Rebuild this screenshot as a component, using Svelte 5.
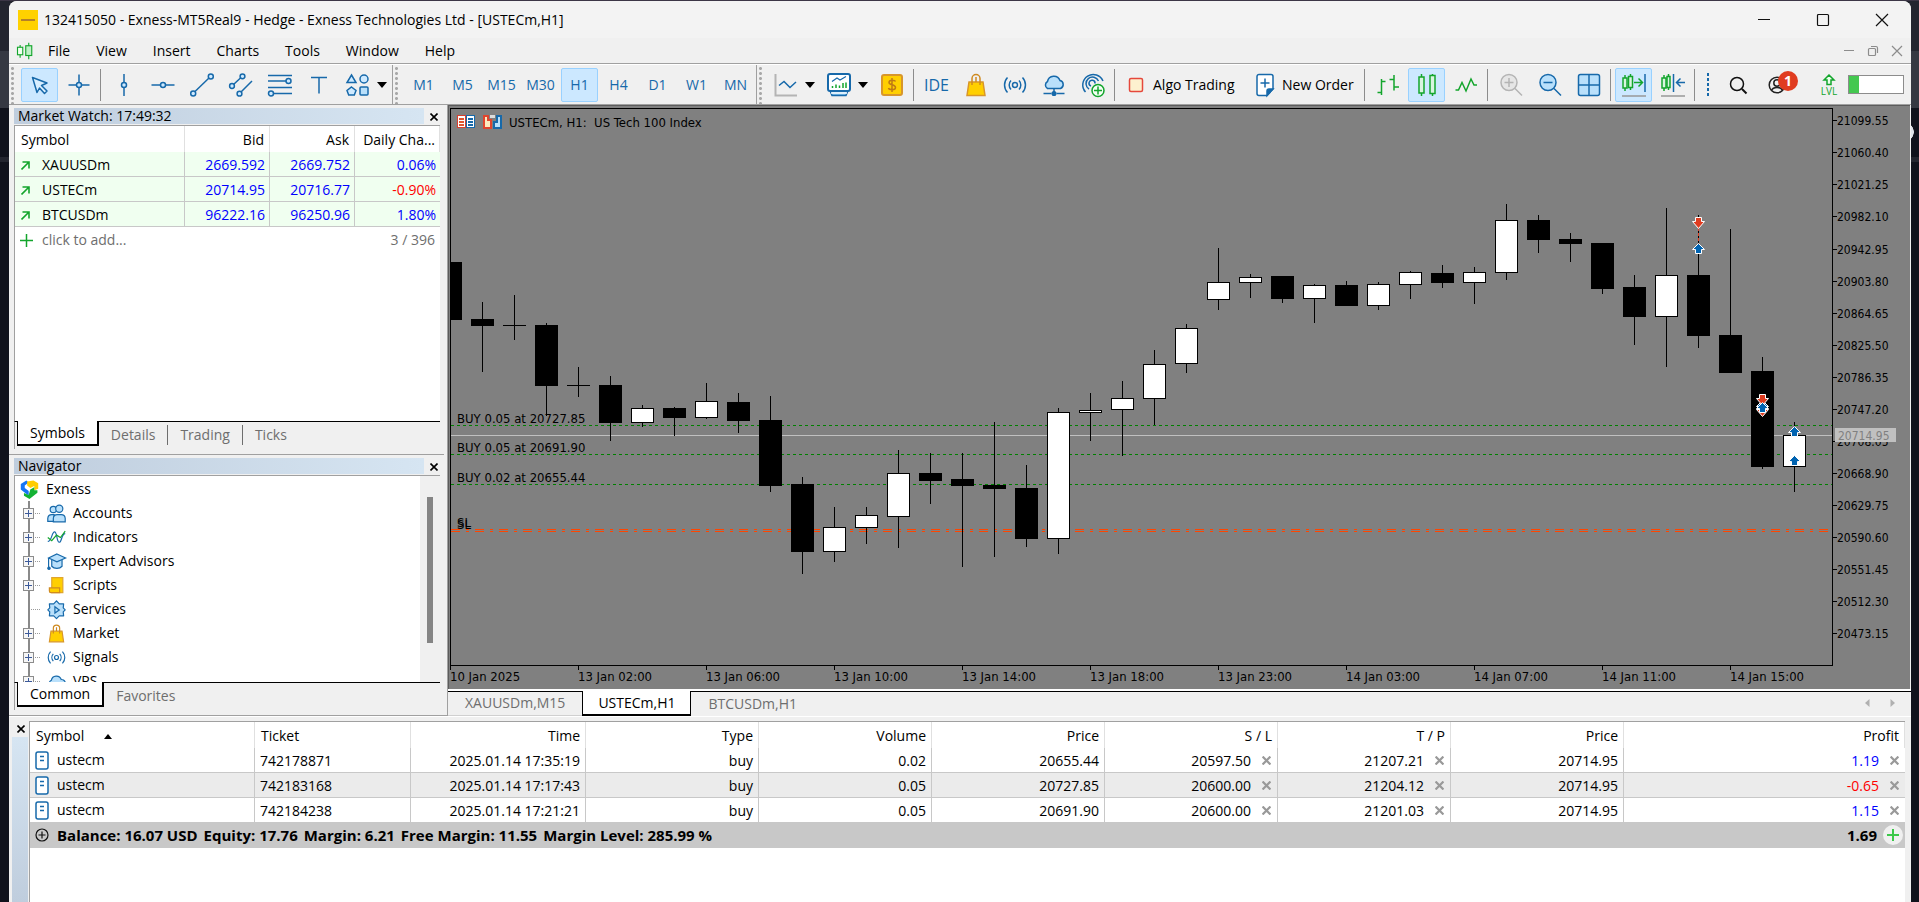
<script>
  const menus = ['File', 'View', 'Insert', 'Charts', 'Tools', 'Window', 'Help'];
  const drawTools = [
    ['vline', 'Vertical line'], ['hline', 'Horizontal line'], ['trend', 'Trendline'], ['channel', 'Channel'],
    ['fibo', 'Fibonacci'], ['text', 'Text'], ['shapes', 'Shapes']
  ];
  const frames = ['M1', 'M5', 'M15', 'M30', 'H1', 'H4', 'D1', 'W1', 'MN'];
  const services = [['bag', 'Market'], ['signal', 'Signals'], ['cloud', 'VPS'], ['target', 'Copy']];

  const quotes = [
    { symbol: 'XAUUSDm', bid: '2669.592', ask: '2669.752', change: '0.06%' },
    { symbol: 'USTECm', bid: '20714.95', ask: '20716.77', change: '-0.90%' },
    { symbol: 'BTCUSDm', bid: '96222.16', ask: '96250.96', change: '1.80%' }
  ];

  const tree = [
    { label: 'Accounts', icon: 'people', open: true },
    { label: 'Indicators', icon: 'indicator', open: true },
    { label: 'Expert Advisors', icon: 'expert', open: true },
    { label: 'Scripts', icon: 'script', open: true },
    { label: 'Services', icon: 'gear', open: false },
    { label: 'Market', icon: 'bag', open: true },
    { label: 'Signals', icon: 'signal', open: true },
    { label: 'VPS', icon: 'vps', open: true }
  ];

  const trades = [
    { ticket: '742178871', time: '2025.01.14 17:35:19', volume: '0.02', open: '20655.44', sl: '20597.50', tp: '21207.21', price: '20714.95', profit: '1.19' },
    { ticket: '742183168', time: '2025.01.14 17:17:43', volume: '0.05', open: '20727.85', sl: '20600.00', tp: '21204.12', price: '20714.95', profit: '-0.65' },
    { ticket: '742184238', time: '2025.01.14 17:21:21', volume: '0.05', open: '20691.90', sl: '20600.00', tp: '21201.03', price: '20714.95', profit: '1.15' }
  ];

  // high, body top, body bottom, low, rising
  const candles = [
    [262, 262, 320, 320, 0], [302, 319, 326, 372, 0], [295, 325, 326, 340, 0], [323, 325, 386, 416, 0],
    [367, 385, 386, 397, 0], [376, 385, 423, 441, 0], [405, 408, 423, 427, 1], [407, 408, 418, 436, 0],
    [383, 401, 418, 419, 1], [393, 402, 421, 433, 0], [396, 420, 486, 492, 0], [477, 484, 552, 574, 0],
    [507, 527, 552, 562, 1], [507, 515, 528, 544, 1], [450, 473, 517, 548, 1], [453, 473, 481, 504, 0],
    [453, 479, 486, 567, 0], [422, 485, 489, 557, 0], [465, 488, 539, 547, 0], [408, 412, 539, 554, 1],
    [393, 410, 413, 441, 1], [381, 398, 410, 456, 1], [350, 364, 399, 425, 1], [324, 328, 364, 373, 1],
    [248, 282, 300, 310, 1], [274, 277, 283, 298, 1], [276, 276, 299, 303, 0], [284, 285, 299, 323, 1],
    [281, 285, 306, 306, 0], [282, 284, 306, 310, 1], [271, 272, 285, 299, 1], [265, 273, 283, 288, 0],
    [267, 272, 283, 304, 1], [204, 220, 273, 280, 1], [215, 220, 240, 253, 0], [233, 239, 244, 262, 0],
    [243, 243, 289, 294, 0], [275, 287, 317, 345, 0], [208, 275, 317, 367, 1], [215, 275, 336, 348, 0],
    [229, 335, 373, 373, 0], [357, 371, 467, 469, 0], [422, 435, 467, 492, 1]
  ];
  const LEFT = 450;
  const STEP = 32;
  const prices = Array.from({ length: 17 }, (_, i) => (21099.55 - i * 39.15).toFixed(2));
  const times = [
    '10 Jan 2025', '13 Jan 02:00', '13 Jan 06:00', '13 Jan 10:00', '13 Jan 14:00', '13 Jan 18:00',
    '13 Jan 23:00', '14 Jan 03:00', '14 Jan 07:00', '14 Jan 11:00', '14 Jan 15:00'
  ];
  const orders = [
    { y: 425, label: 'BUY 0.05 at 20727.85' },
    { y: 454, label: 'BUY 0.05 at 20691.90' },
    { y: 484, label: 'BUY 0.02 at 20655.44' }
  ];

  let w = $state(1462);
  let h = $state(584);
  let right = $derived(448 + w - 78);
  let bottom = $derived(105 + h - 24);
  let frame = $state('H1');
</script>

{#snippet icon(name, size = 24)}
  <svg class="ico" width={size} height={size} viewBox="0 0 24 24" fill="none" stroke="#1769aa" stroke-width="1.5" aria-hidden="true">
    {#if name === 'cursor'}
      <path d="M4.500 4.500 L19 10 L13.500 12.500 L19 18 L16.500 20.500 L11.500 15 L9 19.500 Z" fill="#d9efff" stroke-linejoin="round" />
    {:else if name === 'cross'}
      <path d="M12 1.500V9M12 15V22.500M1.500 12H9M15 12H22.500" /><circle cx="12" cy="12" r="2.500" fill="#cfeaff" />
    {:else if name === 'vline'}
      <path d="M12 1V9.500M12 14.500V23" /><circle cx="12" cy="12" r="2.500" fill="#cfeaff" />
    {:else if name === 'hline'}
      <path d="M0.500 12H9.500M14.500 12H23.500" /><circle cx="12" cy="12" r="2.500" fill="#cfeaff" />
    {:else if name === 'trend'}
      <path d="M5 18.500L19 5" /><circle cx="3.200" cy="20.500" r="2.500" fill="#cfeaff" /><circle cx="20.800" cy="3.500" r="2.500" fill="#cfeaff" />
    {:else if name === 'channel'}
      <path d="M4.500 11.500L12 4.500M12 19L23 8" /><circle cx="3" cy="13" r="2.400" fill="#cfeaff" /><circle cx="13.500" cy="3.300" r="2.400" fill="#cfeaff" /><circle cx="10.500" cy="20.700" r="2.400" fill="#cfeaff" />
    {:else if name === 'fibo'}
      <path d="M0 2.500H24M0 8H18M0 14.500H24M6 20.500H24" /><circle cx="20.500" cy="8" r="2.500" fill="#cfeaff" /><circle cx="3" cy="20.500" r="2.500" fill="#cfeaff" />
    {:else if name === 'text'}
      <path d="M4 4.500H20M12 4.500V20.500" />
    {:else if name === 'shapes'}
      <path d="M5.500 2L10 9.500H1Z" fill="#cfeaff" /><circle cx="18" cy="6" r="4" fill="#cfeaff" /><path d="M5.500 14L10 17.500L8.300 22H2.700L1 17.500Z" fill="#cfeaff" /><rect x="14" y="14" width="8" height="8" rx="1" fill="#b9e0fb" />
    {:else if name === 'linechart'}
      <path d="M1.500 1V22.500H23" stroke="#b4b4b4" stroke-width="2" /><path d="M5 12.500L10 8.500L16 14.500L22 9" />
    {:else if name === 'template'}
      <path d="M3 17.500H21L19 22.500H5Z" fill="#7cc0ee" /><rect x="1" y="1" width="22" height="17" rx="2" fill="#fff" stroke-width="2" /><path d="M5 8.500L10 5L13 7L19 3.500" stroke-width="1.200" /><path d="M5.500 15V13M9 15V11.500M12.500 15V12.500M16 15V10M19 15V9.500" stroke="#13a52c" /><path d="M4 20H20" stroke="#fff" />
    {:else if name === 'dollar'}
      <rect x="2" y="2" width="20" height="20" rx="2" fill="#ffcf00" stroke="#d8962a" stroke-width="2" /><path d="M15.500 8.500C15 7 9 6.500 9 9.500C9 12.500 15.500 11 15.500 14.500C15.500 17.500 9 17 8.500 15M12 5V19" stroke="#bf7a14" />
    {:else if name === 'bag'}
      <path d="M5 9H19L21 22.500H3Z" fill="#ffcf00" stroke="#d8962a" /><path d="M8 12V5.500A4 4 0 0 1 16 5.500V12M12 9V4" stroke="#cf8a20" />
    {:else if name === 'signal'}
      <circle cx="12" cy="12" r="2.500" /><path d="M8 7.500A6.500 6.500 0 0 0 8 16.500M16 7.500A6.500 6.500 0 0 1 16 16.500M4.500 4.500A11 11 0 0 0 4.500 19.500M19.500 4.500A11 11 0 0 1 19.500 19.500" />
    {:else if name === 'cloud'}
      <path d="M5.500 15.500A4 4 0 0 1 5.500 8.500A6.500 6.500 0 0 1 18 7.500A4.200 4.200 0 0 1 18.500 15.500Z" fill="#b9e0fb" /><path d="M12 15.500V19M1.500 20.500H9.500M14.500 20.500H22.500" /><circle cx="12" cy="20.500" r="1.800" fill="#1769aa" />
    {:else if name === 'vps'}
      <path d="M5.500 19.500A5 5 0 0 1 5.500 10.500A6.500 6.500 0 0 1 18 9.500A5 5 0 0 1 18.500 19.500Z" fill="#b9e0fb" />
    {:else if name === 'target'}
      <path d="M4.500 19A10.500 10.500 0 1 1 22 8M8 16A6.500 6.500 0 1 1 17.500 8M10 13A3 3 0 1 1 14 10.500" /><circle cx="17" cy="17.500" r="6" fill="#f4fff4" stroke="#13a52c" /><path d="M17 13.500V21.500M13 17.500H21" stroke="#13a52c" />
    {:else if name === 'algo'}
      <rect x="5.500" y="5.500" width="13" height="13" rx="1.500" fill="#fdf1cf" stroke="#e5483c" />
    {:else if name === 'order'}
      <path d="M6 1.500H18A2 2 0 0 1 20 3.500V16L14 22.500H6A2 2 0 0 1 4 20.500V3.500A2 2 0 0 1 6 1.500Z" fill="#fff" /><path d="M20 16H16A2 2 0 0 0 14 18V22.500Z" fill="#1769aa" /><path d="M12 5.500V14.500M7.500 10H16.500" />
    {:else if name === 'bars'}
      <g stroke="#13a52c"><path d="M5.500 6V22M5.500 8.500H9.500M1.500 19.500H5.500M18 2V17.500M13.500 6.500H18M18 14H23" /></g>
    {:else if name === 'candles'}
      <g stroke="#13a52c"><path d="M6.500 1V23M17.500 1V23" /><rect x="4" y="4" width="5" height="16" fill="#d9f5e0" /><rect x="15" y="2.500" width="5" height="18" fill="#d9f5e0" /></g>
    {:else if name === 'zigzag'}
      <path d="M1.500 17H4.500L8 9.500L12 18L17 6L20 12H23" stroke="#13a52c" />
    {:else if name === 'zoomin'}
      <g stroke="#b4b4b4"><circle cx="10" cy="9.500" r="8" fill="#e6e6e6" /><path d="M16 15.500L23 22.500M5.500 9.500H14.500M10 5V14" /></g>
    {:else if name === 'zoomout'}
      <circle cx="10" cy="9.500" r="8" fill="#b9e0fb" /><path d="M16 15.500L23 22.500M5.500 9.500H14.500" />
    {:else if name === 'grid'}
      <rect x="1.500" y="1.500" width="21" height="21" rx="2" fill="#b9e0fb" /><path d="M12 1.500V22.500M1.500 12H22.500" />
    {:else if name === 'scroll'}
      <path d="M0 23H24" stroke="#999" /><path d="M23 1V19" /><g stroke="#13a52c"><path d="M3 2V18M8.500 1V17" /><rect x="1" y="5" width="4" height="10" fill="#d9f5e0" /><rect x="6.500" y="3.500" width="4" height="11" fill="#d9f5e0" /><path d="M12 9.500H20M16.500 5.500L20.500 9.500L16.500 13.500" /></g>
    {:else if name === 'shift'}
      <path d="M0 23H24" stroke="#999" /><path d="M12.500 1V19M16 9.500H24M19.500 5.500L15.500 9.500L19.500 13.500" /><g stroke="#13a52c"><path d="M3 2V18M7.500 1V17" /><rect x="1" y="5" width="4" height="10" fill="#d9f5e0" /><rect x="6" y="3.500" width="3" height="11" fill="#d9f5e0" /></g>
    {:else if name === 'search'}
      <g stroke="#111"><circle cx="11" cy="11" r="6.500" /><path d="M16 16L20.500 20.500" stroke-width="2" /></g>
    {:else if name === 'person'}
      <g stroke="#222"><circle cx="12" cy="12" r="7.800" /><circle cx="12" cy="10" r="3.200" /><path d="M6.500 17.500C8 13.500 16 13.500 17.500 17.500" /></g>
    {:else if name === 'mt'}
      <g stroke="#13a52c"><path d="M5.500 4V21M17 1V23" /><rect x="2" y="7" width="7" height="10" fill="#f0fff0" /><rect x="13" y="5" width="8" height="13" fill="#bff0c6" /></g>
    {:else if name === 'people'}
      <g fill="#b9e0fb"><circle cx="8" cy="7" r="4" /><path d="M1 22V18A5 5 0 0 1 6 13.500H9V22Z" /><circle cx="15.500" cy="6" r="4.500" /><path d="M8 22.500V18A5 5 0 0 1 13 13.500H18A5 5 0 0 1 23 18V22.500Z" /></g>
    {:else if name === 'indicator'}
      <path d="M1 17C6 17 6 5 9.500 5S12 18 15.500 18S18 7 23 7" /><path d="M1 12L6 16L12 9L17 12L23 4" stroke="#13a52c" />
    {:else if name === 'expert'}
      <path d="M6 10V18C9 21.500 16 21.500 19 18V10" fill="#b9e0fb" /><path d="M12.500 2.500L23.500 7.500L12.500 12.500L2 7.500Z" fill="#b9e0fb" /><path d="M2 7.500V19" /><circle cx="2.500" cy="20.500" r="1.500" fill="#1769aa" />
    {:else if name === 'script'}
      <path d="M6 2H20V21H6Z" fill="#ffcf00" stroke="#e0a52d" /><path d="M3 15H16V21H5A2 2 0 0 1 3 19Z" fill="#ffcf00" stroke="#cf8a20" />
    {:else if name === 'gear'}
      <path d="M12 1L15.500 5H21L20.500 10L23 12.500L20.500 15L21 20H15.500L12 23.500L8.500 20H3L3.500 15L1 12.500L3.500 10L3 5H8.500Z" fill="#b9e0fb" stroke-linejoin="round" /><path d="M10 8.500L15.500 12.500L10 16.500Z" />
    {:else if name === 'exness'}
      <g stroke="none"><path d="M1 5L8 0.500L11 3L6 7V10L11 14V20L1 12Z" fill="#1574f5" /><path d="M9 2L17 0.500L23 4V11L18 13V7.500L13 10L9 7Z" fill="#ffcc00" /><path d="M13 12L18 9V13H22V16L12 24L5 20V16.500L11 19Z" fill="#13b234" /></g>
    {/if}
  </svg>
{/snippet}

{#snippet tool(name, label, on = false)}
  <button class="tool" class:on aria-label={label}>{@render icon(name)}</button>
{/snippet}

{#snippet drop(label)}
  <button class="drop" aria-label={label}><svg width="10" height="6" viewBox="0 0 10 6" aria-hidden="true"><path d="M0 0H10L5 6Z" /></svg></button>
{/snippet}

{#snippet cross(label, size = 8)}
  <button class="x" aria-label={label}>
    <svg width={size} height={size} viewBox="0 0 8 8" fill="none" stroke="currentColor" stroke-width="1.6" aria-hidden="true"><path d="M0.500 0.500L7.500 7.500M7.500 0.500L0.500 7.500" /></svg>
  </button>
{/snippet}

{#snippet up(x, y)}
  <path d="M{x} {y}L{x + 6} {y + 6}H{x + 3}V{y + 10}H{x - 3}V{y + 6}H{x - 6}Z" fill="#0063b1" stroke="#fff" />
{/snippet}
{#snippet down(x, y)}
  <path d="M{x} {y + 11}L{x + 6} {y + 4}H{x + 3}V{y}H{x - 3}V{y + 4}H{x - 6}Z" fill="#e03c20" stroke="#fff" />
{/snippet}

<div class="desktop">
  <div class="window">
    <header class="title">
      <span class="app-icon"></span>
      <span class="caption">132415050 - Exness-MT5Real9 - Hedge - Exness Technologies Ltd - [USTECm,H1]</span>
      <button aria-label="Minimize"><svg width="14" height="14" viewBox="0 0 14 14"><path d="M1 6.500H13" /></svg></button>
      <button aria-label="Maximize"><svg width="14" height="14" viewBox="0 0 14 14"><rect x="1.500" y="1.500" width="11" height="11" rx="1" /></svg></button>
      <button aria-label="Close"><svg width="14" height="14" viewBox="0 0 14 14"><path d="M1 1L13 13M13 1L1 13" /></svg></button>
    </header>

    <nav class="menu">
      <span class="mt">{@render icon('mt', 18)}</span>
      {#each menus as item}<button>{item}</button>{/each}
      <div class="mdi">
        <button aria-label="Minimize chart"><svg width="12" height="12" viewBox="0 0 12 12"><path d="M1 5.500H11" /></svg></button>
        <button aria-label="Restore chart"><svg width="12" height="12" viewBox="0 0 12 12"><rect x="1.500" y="3.500" width="7" height="7" rx="1" /><path d="M4 1.500H9A1.500 1.500 0 0 1 10.500 3V8" /></svg></button>
        <button aria-label="Close chart"><svg width="12" height="12" viewBox="0 0 12 12"><path d="M1 1L11 11M11 1L1 11" /></svg></button>
      </div>
    </nav>

    <div class="toolbar">
      <div class="group">
        <i class="grip"></i>
        {@render tool('cursor', 'Cursor', true)}
        {@render tool('cross', 'Crosshair')}
        <i class="sep"></i>
        {#each drawTools as [name, label]}{@render tool(name, label)}{/each}
        {@render drop('More shapes')}
      </div>
      <div class="group">
        <i class="grip"></i>
        {#each frames as f}<button class="tool" class:on={frame === f} onclick={() => (frame = f)}>{f}</button>{/each}
      </div>
      <div class="group last">
        <i class="grip"></i>
        {@render tool('linechart', 'Chart')}
        {@render drop('Chart list')}
        {@render tool('template', 'Templates')}
        {@render drop('Template list')}
        {@render tool('dollar', 'Quotes')}
        <i class="sep"></i>
        <button class="tool ide">IDE</button>
        {#each services as [name, label]}{@render tool(name, label)}{/each}
        <i class="sep"></i>
        <button class="wide algo">{@render icon('algo')}Algo Trading</button>
        <button class="wide order">{@render icon('order')}New Order</button>
        <i class="sep"></i>
        {@render tool('bars', 'Bar chart')}
        {@render tool('candles', 'Candlesticks', true)}
        {@render tool('zigzag', 'Line chart')}
        <i class="sep"></i>
        {@render tool('zoomin', 'Zoom in')}
        {@render tool('zoomout', 'Zoom out')}
        {@render tool('grid', 'Tile windows')}
        <i class="sep"></i>
        {@render tool('scroll', 'Auto scroll', true)}
        {@render tool('shift', 'Chart shift')}
        <i class="sep"></i>
        <i class="dots"></i>
        <div class="status">
          {@render tool('search', 'Search')}
          <button class="tool account" aria-label="Notifications">{@render icon('person')}<b>1</b></button>
          <button class="lvl">
            <svg width="14" height="12" viewBox="0 0 14 12" fill="#eaffea" stroke="#13a52c" stroke-width="1.500" aria-hidden="true"><path d="M7 1L12 6H9V10.500H5V6H2Z" /></svg>
            LVL
          </button>
          <div class="meter"><i></i></div>
        </div>
      </div>
    </div>

    <div class="work">
      <aside>
        <section class="panel watch">
          <div class="bar"><h2>Market Watch: 17:49:32</h2>{@render cross('Close Market Watch')}</div>
          <div class="body">
            <table>
              <colgroup><col /><col class="q" /><col class="q" /><col class="q" /></colgroup>
              <thead><tr><th>Symbol</th><th>Bid</th><th>Ask</th><th>Daily Cha...</th></tr></thead>
              <tbody>
                {#each quotes as q}
                  <tr>
                    <td><svg width="9" height="9" viewBox="0 0 9 9" fill="none" stroke="#13a52c" stroke-width="1.600" aria-hidden="true"><path d="M0.500 8.500L7.500 1.500M1.500 1H8V7.500" /></svg>{q.symbol}</td>
                    <td>{q.bid}</td><td>{q.ask}</td><td class:neg={q.change[0] === '-'}>{q.change}</td>
                  </tr>
                {/each}
              </tbody>
            </table>
            <div class="add">
              <svg width="13" height="13" viewBox="0 0 13 13" stroke="#13a52c" stroke-width="1.500" aria-hidden="true"><path d="M6.500 0V13M0 6.500H13" /></svg>
              <button>click to add...</button><span>3 / 396</span>
            </div>
          </div>
          <div class="tabs"><button class="cur">Symbols</button><button class="div">Details</button><button class="div">Trading</button><button>Ticks</button></div>
        </section>

        <section class="panel navigator">
          <div class="bar"><h2>Navigator</h2>{@render cross('Close Navigator')}</div>
          <div class="body split">
            <ul>
              <li class="root">{@render icon('exness', 19)}Exness</li>
              {#each tree as node}
                <li><span class="branch">{#if node.open}<i></i>{/if}</span>{@render icon(node.icon, 19)}{node.label}</li>
              {/each}
            </ul>
            <div class="track"><i></i></div>
          </div>
          <div class="tabs"><button class="cur">Common</button><button>Favorites</button></div>
        </section>
      </aside>

      <main>
        <div class="chart" bind:clientWidth={w} bind:clientHeight={h}>
          <svg width={w} height={h} viewBox="448 105 {w} {h}" shape-rendering="crispEdges" font-size="13">
            <path d="M448.500 {105 + h}V105.500H{448 + w}" fill="none" stroke="#5c5c5c" />
            {#each orders as o}
              <path d="M451 {o.y + 0.5}H{right}" stroke="#008000" stroke-dasharray="3 3" />
              <text x="457" y={o.y - 2}>{o.label}</text>
            {/each}
            <path d="M451 435.500H{right}" stroke="#c0c0c0" />
            <path d="M451 529.500H{right - 4}M451 531.500H{right - 4}" stroke="#ff4500" stroke-dasharray="9 6 3 6" />
            <text x="457" y="527">SL</text>
            <text x="457" y="529">SL</text>
            {#each candles as [hi, top, low, lo, rising], i}
              {@const x = LEFT + i * STEP}
              <path d="M{x + 0.5} {hi}V{lo}" stroke="#000" />
              {#if rising}
                <rect x={x - 10.5} y={top + 0.5} width="22" height={low - top - 1} fill="#fff" stroke="#000" />
              {:else}
                <rect x={i ? x - 11 : x} y={top} width={i ? 23 : 12} height={low - top} />
              {/if}
            {/each}
            <g shape-rendering="auto">
              <path d="M1698.500 228V244" stroke="#e03c20" stroke-dasharray="3 2" />
              {@render down(1698.5, 217.5)}
              {@render up(1698.5, 243.5)}
              {@render down(1762.5, 405.5)}
              {@render up(1762.5, 400.5)}
              {@render down(1762.5, 394.5)}
              {@render up(1762.5, 402.5)}
              {@render up(1794.5, 426.5)}
              {@render up(1794.5, 455.5)}
            </g>
            <path d="M450.500 {bottom}V108.500H{right + 0.5}V{bottom + 0.5}H450" fill="none" stroke="#000" />
            <g font-size="12">
              {#each prices as p, i}
                {@const y = Math.round(120.3 + i * 32.05)}
                <path d="M{right + 1} {y + 0.5}h4" stroke="#000" />
                <text x={right + 5} y={y + 5}>{p}</text>
              {/each}
              <rect x={right + 3} y="428" width="61" height="14" fill="#c0c0c0" />
              <text x={right + 6} y="440" class="last-price">20714.95</text>
            </g>
            {#each times as t, i}
              <path d="M{LEFT + i * 128 + 0.5} {bottom}v5" stroke="#000" />
              <text x={LEFT + i * 128} y={bottom + 16}>{t}</text>
            {/each}
            <g stroke-width="1">
              <rect x="457.500" y="115.500" width="8" height="12" fill="#fff" stroke="#d8402f" /><rect x="466.500" y="115.500" width="8" height="12" fill="#fff" stroke="#1769aa" />
              <path d="M459 118.500H464M459 121.500H464M459 124.500H464" stroke="#e0552f" stroke-width="2" /><path d="M468 118.500H473M468 121.500H473M468 124.500H473" stroke="#1769aa" stroke-width="2" />
              <path d="M484 116H488V120H491V128H484Z" fill="#fdebc0" stroke="#e0452f" stroke-width="2" /><path d="M497 116H501V128H494V122H497Z" fill="#b9e0fb" stroke="#1769aa" stroke-width="2" /><path d="M490 116.500H495" stroke="#ddd" stroke-width="3" />
            </g>
            <text x="509" y="127" xml:space="preserve">USTECm, H1:  US Tech 100 Index</text>
          </svg>
        </div>
        <div class="chart-tabs">
          <button>XAUUSDm,M15</button><button class="cur">USTECm,H1</button><button class="plain">BTCUSDm,H1</button>
          <div class="pager">
            <button aria-label="Previous tabs"><svg width="5" height="8" viewBox="0 0 5 8"><path d="M4.500 0V8L0 4Z" /></svg></button>
            <button aria-label="Next tabs"><svg width="5" height="8" viewBox="0 0 5 8"><path d="M0.500 0V8L5 4Z" /></svg></button>
          </div>
        </div>
      </main>
    </div>

    <section class="terminal">
      <div class="side">{@render cross('Close terminal')}<i></i></div>
      <div class="trade">
        <table>
          <colgroup><col class="c1" /><col class="c2" /><col class="c3" /><col class="c4" /><col class="c4" /><col class="c4" /><col class="c4" /><col class="c4" /><col class="c4" /><col /></colgroup>
          <thead>
            <tr><th>Symbol<svg width="8" height="5" viewBox="0 0 8 5" aria-hidden="true"><path d="M0 5H8L4 0Z" /></svg></th><th>Ticket</th><th>Time</th><th>Type</th><th>Volume</th><th>Price</th><th>S / L</th><th>T / P</th><th>Price</th><th>Profit</th></tr>
          </thead>
          <tbody>
            {#each trades as t}
              <tr>
                <td><svg width="14" height="19" viewBox="0 0 14 19" fill="#fff" stroke="#1769aa" stroke-width="1.500" aria-hidden="true"><rect x="1" y="1" width="12" height="17" rx="2" /><path d="M5 5.500H9M5 9.500H9" /></svg>ustecm</td>
                <td>{t.ticket}</td><td>{t.time}</td><td>buy</td><td>{t.volume}</td><td>{t.open}</td>
                <td>{t.sl}{@render cross('Remove stop loss', 9)}</td>
                <td>{t.tp}{@render cross('Remove take profit', 9)}</td>
                <td>{t.price}</td>
                <td><span class="gain" class:neg={t.profit[0] === '-'}>{t.profit}</span>{@render cross('Close position', 9)}</td>
              </tr>
            {/each}
          </tbody>
        </table>
        <div class="summary">
          <svg width="14" height="14" viewBox="0 0 14 14" fill="none" stroke="#111" stroke-width="1.200" aria-hidden="true"><circle cx="7" cy="7" r="6" /><path d="M7 3.500V10.500M3.500 7H10.500" /></svg>
          <span class="first">Balance: 16.07 USD</span><span>Equity: 17.76</span><span>Margin: 6.21</span><span>Free Margin: 11.55</span><span>Margin Level: 285.99 %</span>
          <span class="total">1.69</span>
          <button aria-label="Add"><svg width="20" height="20" viewBox="0 0 20 20" fill="none" aria-hidden="true"><circle cx="10" cy="10" r="10" fill="#f0f0f0" /><path d="M10 4V16M4 10H16" stroke="#3cc84a" stroke-width="2" /></svg></button>
        </div>
      </div>
    </section>
  </div>
</div>

<style>
  :global(body) { margin: 0; }
  * { box-sizing: border-box; }
  button { border: 0; background: none; padding: 0; margin: 0; font: inherit; color: inherit; display: flex; align-items: center; justify-content: center; }
  .ico { display: block; flex: none; overflow: visible; }
  .desktop {
    height: 100vh; min-height: 700px; padding: 1px 8px 0 9px; overflow: hidden;
    font: 14px/18px "Open Sans", "Noto Sans", sans-serif; color: #000;
    background:
      radial-gradient(circle 10px at calc(100% - 15px) 132px, #dfe3ea 95%, transparent),
      linear-gradient(#3c3646 0 1px, #23252f 1px 51px, #353842 51px 108px, #10121c 108px 157px, #23252f 157px 162px, #10121c 162px);
  }
  .window { height: 100%; display: flex; flex-direction: column; background: #f0f0f0; border-radius: 8px 8px 0 0; overflow: hidden; }

  .title { flex: 0 0 37px; display: flex; align-items: center; background: #f3f3f3; padding-left: 9px; }
  .app-icon { width: 20px; height: 20px; margin-right: 6px; background: linear-gradient(#b4802a, #b4802a) center / 14px 2px no-repeat #ffd100; }
  .caption { flex: 1; white-space: nowrap; }
  .title button { width: 59px; height: 37px; }
  .title svg, .mdi svg { fill: none; stroke: #111; stroke-width: 1.2; }

  .menu { flex: 0 0 26px; display: flex; align-items: center; gap: 26px; padding-left: 7px; border-bottom: 1px solid #a0a0a0; }
  .mt { margin-right: -12px; }
  .mdi { display: flex; margin-left: auto; padding-right: 2px; }
  .mdi button { width: 24px; height: 24px; }
  .mdi svg { stroke: #8c8c8c; }

  .toolbar { flex: 0 0 41px; display: flex; border-top: 1px solid #fff; border-bottom: 1px solid #a0a0a0; }
  .group { display: flex; align-items: center; gap: 2px; border-right: 1px solid #a0a0a0; padding: 0 2px; }
  .group.last { flex: 1; border: 0; }
  .grip { width: 3px; height: 38px; margin-right: 5px; background: radial-gradient(circle, #a8a8a8 1px, transparent 2px) 0 0 / 3px 5px; }
  .group.last .grip { margin-right: 3px; }
  .sep { width: 1px; height: 32px; margin: 0 2px 0 1px; background: #8c8c8c; }
  .tool { width: 37px; height: 34px; flex: none; border-radius: 2px; color: #1769aa; }
  .tool.on { background: #cce8ff; border: 1px solid #99d1ff; }
  .tool.ide { font-size: 16px; }
  .drop { width: 12px; height: 34px; margin: 0 2px 0 -2px; flex: none; }
  .wide { height: 34px; flex: none; justify-content: flex-start; padding-left: 5px; gap: 5px; white-space: nowrap; }
  .algo { width: 128px; }
  .order { width: 112px; padding-left: 4px; }
  .dots { width: 2px; height: 24px; margin-left: 8px; background: repeating-linear-gradient(#1769aa 0 3px, transparent 3px 5px); }
  .status { margin-left: auto; display: flex; align-items: center; gap: 2px; padding-right: 5px; }
  .account { position: relative; margin-right: 23px; }
  .account b { position: absolute; left: 20px; top: 3px; width: 20px; height: 20px; border-radius: 10px; background: #e03c20; color: #fff; font-size: 14px; line-height: 20px; text-align: center; }
  .lvl { flex-direction: column; width: 18px; margin-right: 8px; font: 10px/10px "Open Sans", sans-serif; color: #13a52c; }
  .meter { width: 56px; height: 19px; border: 1px solid #8c8c8c; background: #fff; }
  .meter i { display: block; width: 18%; height: 100%; background: #44c850; }

  .work { flex: 1 1 0; min-height: 0; display: flex; }
  aside { flex: 0 0 438px; display: flex; flex-direction: column; padding-right: 3px; border-bottom: 1px solid #a0a0a0; }
  .panel { display: flex; flex-direction: column; min-height: 0; padding: 3px 0 5px 5px; }
  .watch { flex: 1 1 0; border-bottom: 1px solid #a0a0a0; }
  .navigator { flex: 0 0 260px; }
  .bar { display: flex; flex: none; height: 17px; }
  h2 { flex: 1; margin: 0; font: 14px/16px "Open Sans", sans-serif; height: 16px; padding-left: 4px; background: linear-gradient(90deg, #bfcddd, #d6e5f2); }
  .bar .x { width: 20px; color: #000; }
  .body { flex: 1 1 0; min-height: 0; background: #fff; border: solid #a0a0a0; border-width: 1px 0 0 1px; margin-right: 4px; }
  .x { color: #8c8c8c; }
  table { width: 100%; border-collapse: separate; border-spacing: 0; table-layout: fixed; }
  th, td { padding: 1px 5px 0; text-align: right; white-space: nowrap; font-weight: 400; border-right: 1px solid #c8c8c8; overflow: hidden; }
  th { height: 26px; border-color: #e0e0e0; }
  td { height: 25px; border-bottom: 1px solid #c8c8c8; }
  th:first-child, td:first-child { text-align: left; padding-left: 6px; }
  .q { width: 85px; }
  .watch td { background: #f0fff0; color: #0000ff; padding-right: 4px; }
  .watch td:first-child { color: #000; }
  .watch td:last-child { border-right: 0; }
  .watch th:nth-child(4) { padding-left: 2px; padding-right: 4px; }
  .watch td svg { margin-right: 12px; }
  td.neg, .watch td.neg, .gain.neg { color: #ff0000; }
  .add { display: flex; align-items: center; height: 26px; padding: 0 5px; color: #6e6e6e; gap: 9px; }
  .add span { margin-left: auto; }
  .tabs { display: flex; flex: none; height: 28px; margin-right: 4px; border-top: 1px solid #000; border-left: 1px solid #a0a0a0; color: #6e6e6e; align-items: flex-start; padding-left: 2px; }
  .tabs button { height: 20px; margin-top: 3px; padding: 0 12px; }
  .tabs .div { border-right: 1px solid #6e6e6e; }
  .tabs .cur { color: #000; background: #fff; height: 25px; margin-top: -1px; border: solid #000; border-width: 0 2px 2px 1px; }
  .split { display: flex; overflow: hidden; }
  ul { flex: 1; list-style: none; margin: 0; padding: 1px 0 0; }
  li { display: flex; align-items: center; height: 24px; gap: 7px; }
  li.root { padding-left: 5px; }
  .branch { width: 23px; height: 24px; margin-left: 8px; margin-right: -6px; display: flex; align-items: center; background: radial-gradient(circle, #8a8a8a 1px, transparent 1px) 5px 0 / 2px 2px repeat-y, repeating-linear-gradient(90deg, #9a9a9a 0 1px, transparent 1px 2px) 6px 12px / 12px 1px no-repeat; }
  .branch i { width: 11px; height: 11px; border: 1px solid #8c8c8c; background: linear-gradient(#3c5a9a, #3c5a9a) center / 7px 1px no-repeat, linear-gradient(#3c5a9a, #3c5a9a) center / 1px 7px no-repeat #f6f6f6; }
  .track { width: 20px; background: #f0f0f0; padding: 21px 7px 0; }
  .track i { display: block; width: 6px; height: 146px; background: #858585; }

  main { flex: 1; min-width: 0; display: flex; flex-direction: column; border-left: 1px solid #a0a0a0; }
  .chart { flex: 1; min-height: 0; overflow: hidden; background: #808080; margin-right: 1px; }
  .chart svg { display: block; font-family: "DejaVu Sans Condensed", "DejaVu Sans", sans-serif; }
  .last-price { fill: #808080; }
  .chart-tabs { flex: 0 0 27px; display: flex; align-items: flex-start; border-top: 2px solid #fff; color: #6e6e6e; background: linear-gradient(#000, #000) 0 0 / 100% 1px no-repeat; }
  .chart-tabs > button { height: 25px; padding: 0 17px; border-bottom: 1px solid #d0d0d0; }
  .chart-tabs > .cur { background: #fff; color: #000; padding: 0 15px; border: solid #000; border-width: 0 1px 2px; }
  .chart-tabs > .plain { border-bottom: 0; }
  .pager { margin-left: auto; display: flex; padding-right: 6px; }
  .pager button { width: 25px; height: 24px; }
  .pager svg { fill: #b0b0b0; }

  .terminal { flex: 0 0 186px; display: flex; border-top: 1px solid #fff; padding: 4px 6px 0 3px; }
  .side { width: 17px; display: flex; flex-direction: column; }
  .side .x { height: 16px; color: #000; }
  .side i { flex: 1; margin-right: 1px; background: linear-gradient(#d6e5f2, #bfcddd); }
  .trade { flex: 1; min-width: 0; background: #fff; border: solid #a0a0a0; border-width: 1px 0 0 1px; }
  .c1 { width: 225px; }
  .c2 { width: 156px; }
  .c3 { width: 175px; }
  .c4 { width: 173px; }
  .trade th:nth-child(2), .trade td:nth-child(2) { text-align: left; }
  .trade th:nth-child(2) { padding-left: 6px; }
  .trade tbody tr:nth-child(2) td { background: #ebebeb; }
  .trade tbody tr:last-child td { border-bottom: 0; height: 24px; }
  .trade td:last-child { border-right: 0; }
  .trade td:first-child { padding-left: 5px; }
  .trade td:first-child svg { margin-right: 8px; vertical-align: middle; }
  .trade th svg { margin-left: 20px; vertical-align: middle; }
  .trade .x { display: inline-flex; width: 12px; height: 18px; margin-left: 9px; vertical-align: top; color: #999; }
  .trade .x svg { stroke-width: 2; }
  .gain { color: #0000ff; }
  .summary { display: flex; align-items: center; height: 26px; padding: 0 2px 0 5px; gap: 6px; background: #c8c8c8; font-size: 15px; font-weight: 700; white-space: nowrap; }
  .summary .first { margin-left: 2px; }
  .total { margin-left: auto; }
</style>
